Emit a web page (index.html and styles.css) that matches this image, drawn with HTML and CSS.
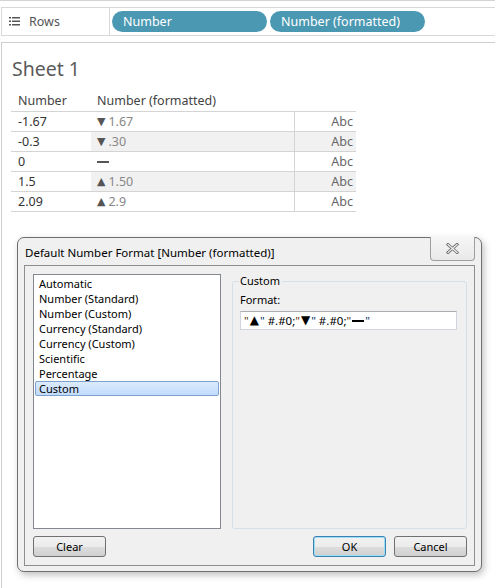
FILE: index.html
```html
<!DOCTYPE html>
<html>
<head>
<meta charset="utf-8">
<link rel="stylesheet" href="styles.css">
</head>
<body>
<div class="page">
  <div class="topline"></div>
  <div class="shelf">
    <div class="shelf-label">
      <svg class="list-icon" width="11" height="9" viewBox="0 0 11 9">
        <rect x="0" y="0" width="2" height="1.5" fill="#555"/>
        <rect x="3" y="0" width="8" height="1.5" fill="#555"/>
        <rect x="0" y="3.5" width="2" height="1.5" fill="#555"/>
        <rect x="3" y="3.5" width="8" height="1.5" fill="#555"/>
        <rect x="0" y="7" width="2" height="1.5" fill="#555"/>
        <rect x="3" y="7" width="8" height="1.5" fill="#555"/>
      </svg>
      <span>Rows</span>
    </div>
    <div class="pills">
      <div class="pill">Number</div>
      <div class="pill">Number (formatted)</div>
    </div>
  </div>
  <div class="sheet">
    <div class="sheet-title">Sheet 1</div>
    <div class="table">
      <div class="thead">
        <div class="c1">Number</div>
        <div class="c2">Number (formatted)</div>
      </div>
      <div class="row">
        <div class="c1">-1.67</div>
        <div class="band"><div class="c2"><span class="tri">▼</span> 1.67</div><div class="c3">Abc</div></div>
      </div>
      <div class="row">
        <div class="c1">-0.3</div>
        <div class="band grey"><div class="c2"><span class="tri">▼</span> .30</div><div class="c3">Abc</div></div>
      </div>
      <div class="row">
        <div class="c1">0</div>
        <div class="band"><div class="c2"><span class="dash"></span></div><div class="c3">Abc</div></div>
      </div>
      <div class="row">
        <div class="c1">1.5</div>
        <div class="band grey"><div class="c2"><span class="tri">▲</span> 1.50</div><div class="c3">Abc</div></div>
      </div>
      <div class="row">
        <div class="c1">2.09</div>
        <div class="band"><div class="c2"><span class="tri">▲</span> 2.9</div><div class="c3">Abc</div></div>
      </div>
    </div>
  </div>

  <div class="dialog">
    <div class="titlebar">
      <span class="title">Default Number Format [Number (formatted)]</span>
      <div class="close">
        <svg width="13" height="11" viewBox="0 0 13 11">
          <path d="M2 1.5 L11 9.5 M11 1.5 L2 9.5" stroke="#707070" stroke-width="3" stroke-linecap="square" fill="none"/>
          <path d="M2 1.5 L11 9.5 M11 1.5 L2 9.5" stroke="#f4f4f4" stroke-width="1.2" stroke-linecap="square" fill="none"/>
        </svg>
      </div>
    </div>
    <div class="client">
      <div class="main">
        <div class="listbox">
          <div class="item">Automatic</div>
          <div class="item">Number (Standard)</div>
          <div class="item">Number (Custom)</div>
          <div class="item">Currency (Standard)</div>
          <div class="item">Currency (Custom)</div>
          <div class="item">Scientific</div>
          <div class="item">Percentage</div>
          <div class="item selected">Custom</div>
        </div>
        <div class="group">
          <div class="legend">Custom</div>
          <div class="flabel">Format:</div>
          <div class="input"><span class="q1">"</span><b>▲</b><span class="q2">"</span> #.#0;<span class="q1">"</span><b>▼</b><span class="q2">"</span> #.#0;<span class="q1">"</span><span class="emdash"></span><span class="q2">"</span></div>
        </div>
      </div>
      <div class="buttons">
        <div class="btn">Clear</div>
        <div class="spacer"></div>
        <div class="btn default">OK</div>
        <div class="btn">Cancel</div>
      </div>
    </div>
  </div>
</div>
</body>
</html>
```

FILE: styles.css
```css
html, body {
  margin: 0;
  padding: 0;
  background: #ffffff;
}
body {
  font-family: "Noto Sans", "Open Sans", sans-serif;
  width: 495px;
  height: 588px;
  overflow: hidden;
}
.page {
  position: relative;
  width: 495px;
  height: 588px;
}
.topline {
  height: 1px;
  background: #d4d4d4;
}
.shelf {
  margin-top: 6px;
  margin-left: 1px;
  height: 27px;
  border: 1px solid #d8d8d8;
  border-right: none;
  display: flex;
  align-items: center;
}
.shelf-label {
  width: 108px;
  height: 100%;
  border-right: 1px solid #d8d8d8;
  display: flex;
  align-items: center;
  box-sizing: border-box;
  padding-left: 7px;
  color: #555;
  font-size: 12.5px;
}
.list-icon {
  margin-right: 9px;
}
.pills {
  display: flex;
  gap: 3px;
  padding-left: 2px;
}
.pill {
  width: 155px;
  height: 21px;
  border-radius: 11px;
  background: #4a98b2;
  color: #fff;
  font-size: 12.5px;
  line-height: 21px;
  padding-left: 11px;
  box-sizing: border-box;
}
.sheet {
  margin-top: 6px;
  margin-left: 1px;
  border-top: 1px solid #cfcfcf;
  border-left: 1px solid #cfcfcf;
  height: 550px;
}
.sheet-title {
  font-size: 19.5px;
  color: #5a5a5a;
  padding-left: 10px;
  padding-top: 12px;
  height: 36px;
  line-height: 27px;
}
.table {
  margin-left: 9px;
  width: 345px;
  font-size: 12.5px;
  color: #333;
}
.thead {
  display: flex;
  height: 20px;
  line-height: 20px;
  border-bottom: 1px solid #d4d4d4;
  color: #444;
}
.thead .c1 { width: 80px; padding-left: 7px; box-sizing: border-box; flex: none; }
.thead .c2 { padding-left: 6px; }
.row {
  display: flex;
  height: 19px;
  line-height: 19px;
  border-bottom: 1px solid #d4d4d4;
}
.row .c1 {
  width: 80px;
  padding-left: 7px;
  box-sizing: border-box;
  flex: none;
}
.band {
  display: flex;
  flex: 1;
}
.band.grey { background: #f1f1f1; }
.band .c2 {
  width: 204px;
  padding-left: 6px;
  box-sizing: border-box;
  border-right: 1px solid #d4d4d4;
  color: #888;
  display: flex;
  align-items: center;
}
.tri {
  color: #555;
  font-size: 11px;
  margin-right: 3px;
  font-family: "DejaVu Sans", sans-serif;
}
.dash {
  display: inline-block;
  width: 12px;
  height: 2px;
  background: #555;
}
.band .c3 {
  flex: 1;
  text-align: right;
  padding-right: 3px;
  color: #666;
}

/* dialog */
.dialog {
  position: absolute;
  left: 17px;
  top: 237px;
  width: 465px;
  height: 335px;
  box-sizing: border-box;
  border: 1px solid #6f6f6f;
  border-radius: 7px;
  background: #f0f0f0;
  box-shadow: 2px 3px 7px rgba(0,0,0,0.25);
  display: flex;
  flex-direction: column;
  font-family: "Noto Sans", "Open Sans", sans-serif;
  font-size: 11px;
  color: #000;
}
.titlebar {
  height: 28px;
  position: relative;
  display: flex;
  align-items: center;
  padding-left: 7px;
  box-sizing: border-box;
  padding-top: 2px;
}
.title {
  font-size: 11.5px;
  color: #000;
}
.close {
  position: absolute;
  right: 6px;
  top: -1px;
  width: 45px;
  height: 24px;
  box-sizing: border-box;
  border: 1px solid #9e9e9e;
  border-top: none;
  border-radius: 0 0 4px 4px;
  background: linear-gradient(#f6f6f6, #e9e9e9);
  display: flex;
  align-items: center;
  justify-content: center;
}
.client {
  margin: 0 6px 5px 6px;
  flex: 1;
  border: 1px solid #8e8e8e;
  background: #f0f0f0;
  display: flex;
  flex-direction: column;
  padding: 8px 7px 8px 8px;
}
.main {
  display: flex;
  gap: 11px;
  height: 255px;
}
.listbox {
  width: 188px;
  height: 255px;
  box-sizing: border-box;
  border: 1px solid #828790;
  background: #fff;
  padding: 1px 1px;
}
.item {
  height: 15px;
  line-height: 15px;
  padding-left: 4px;
  font-size: 11px;
}
.item.selected {
  border: 1px solid #7da2ce;
  border-radius: 2px;
  background: linear-gradient(#dcebfc, #c1dbfc);
  height: 13px;
  line-height: 13px;
  padding-left: 3px;
}
.group {
  flex: 1;
  position: relative;
  margin-top: 7px;
  height: 248px;
  box-sizing: border-box;
  border: 1px solid #d5dfe5;
  border-radius: 3px;
  padding: 10px 9px 0 7px;
}
.legend {
  position: absolute;
  top: -9px;
  left: 6px;
  background: #f0f0f0;
  padding: 0 2px 0 1px;
  font-size: 11px;
  line-height: 16px;
}
.flabel {
  font-size: 11px;
  line-height: 16px;
}
.input {
  margin-top: 3px;
  height: 19px;
  box-sizing: border-box;
  border: 1px solid #d0d5dc;
  border-top-color: #abadb3;
  background: #fff;
  font-size: 11.5px;
  line-height: 17px;
  padding-left: 3px;
  display: flex;
  align-items: center;
  white-space: pre;
}
.input b {
  font-family: "DejaVu Sans", sans-serif;
  font-size: 12px;
  font-weight: normal;
  margin: 0 1px;
}
.q1 { color: #5a3200; }
.q2 { color: #00326a; }
.emdash {
  display: inline-block;
  width: 12px;
  height: 2px;
  background: #000;
  margin: 1px 1px 0 1px;
}
.buttons {
  display: flex;
  margin-top: 7px;
  gap: 8px;
}
.spacer { flex: 1; }
.btn {
  width: 73px;
  height: 21px;
  box-sizing: border-box;
  border: 1px solid #707070;
  border-radius: 3px;
  background: linear-gradient(#f2f2f2 0%, #ebebeb 50%, #dddddd 51%, #cfcfcf 100%);
  text-align: center;
  line-height: 19px;
  font-size: 11px;
}
.btn.default {
  border-color: #3c7fb1;
  box-shadow: inset 0 0 0 1px #9be0f6;
}
```
